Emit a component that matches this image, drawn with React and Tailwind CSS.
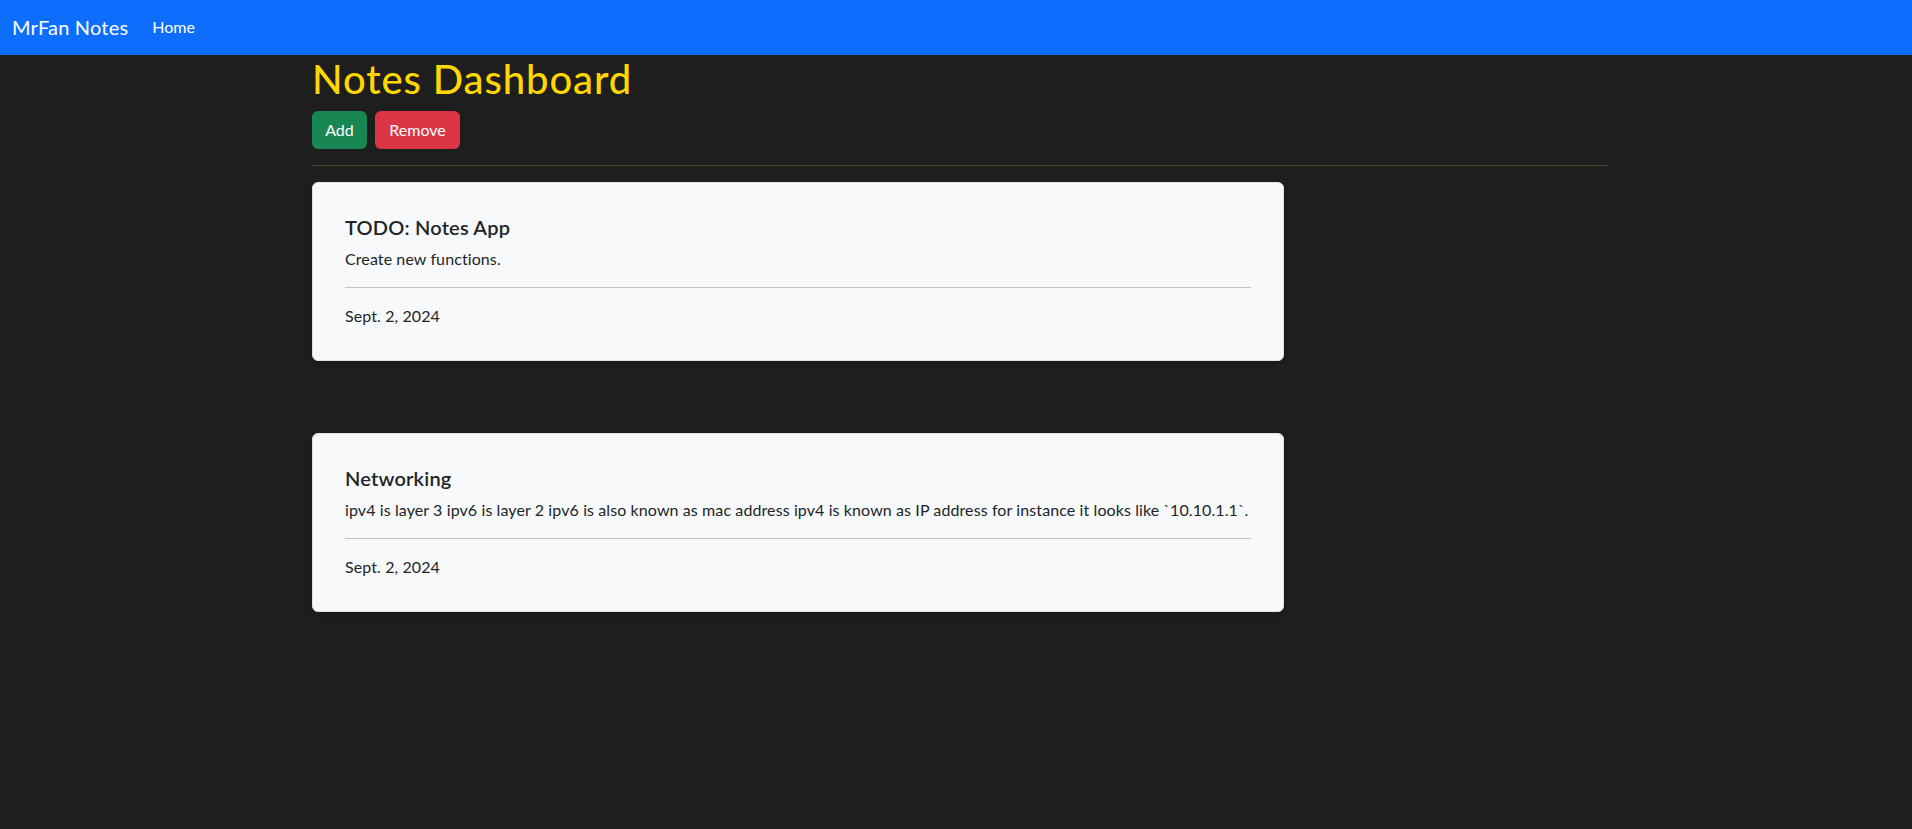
import React from 'react';

const notes = [
  {
    id: 1,
    title: 'TODO: Notes App',
    body: 'Create new functions.',
    date: 'Sept. 2, 2024',
  },
  {
    id: 2,
    title: 'Networking',
    body: 'ipv4 is layer 3 ipv6 is layer 2 ipv6 is also known as mac address ipv4 is known as IP address for instance it looks like `10.10.1.1`.',
    date: 'Sept. 2, 2024',
  },
];

function NoteCard({ note }) {
  return (
    <div className="w-[972px] bg-[#f8f9fa] text-[#212529] border border-[#dee2e6] rounded-[6px] shadow-md px-[32px] pt-[32px] pb-[32px]">
      <h5 className="text-[20px] leading-[24px] font-semibold tracking-[0.2px] mb-2">{note.title}</h5>
      <p className="text-[16px] leading-[24px] tracking-[0.1px]">{note.body}</p>
      <hr className="my-4 border-0 border-t border-[#c2c3c5]" />
      <p className="text-[16px] leading-[24px] tracking-[0.1px]">{note.date}</p>
    </div>
  );
}

export default function App() {
  return (
    <div className="min-h-[829px] bg-[#1e1e1e] font-['Lato','Liberation_Sans',sans-serif]">
      {/* NAVBAR */}
      <nav className="h-[55px] bg-[#0d6efd] flex items-center px-3 pb-[1px]">
        <span className="text-white text-[20px] tracking-[0.2px] mr-[16px]">MrFan Notes</span>
        <span className="text-white text-[16px] px-2">Home</span>
      </nav>

      {/* CONTENT */}
      <div className="ml-[312px] w-[1296px]">
        <h1 className="text-[40px] leading-[48px] font-medium tracking-[0.9px] text-[#ffd700] mb-2">Notes Dashboard</h1>
        <div className="flex gap-[8px]">
          <button className="h-[38px] w-[55px] rounded-[6px] bg-[#198754] text-white text-[16px]">Add</button>
          <button className="h-[38px] w-[85px] rounded-[6px] bg-[#dc3545] text-white text-[16px]">Remove</button>
        </div>
        <hr className="mt-4 mb-4 border-0 border-t border-[#4e4a20]" />

        <div className="flex flex-col gap-[72px]">
          {notes.map((note) => (
            <NoteCard key={note.id} note={note} />
          ))}
        </div>
      </div>
    </div>
  );
}
